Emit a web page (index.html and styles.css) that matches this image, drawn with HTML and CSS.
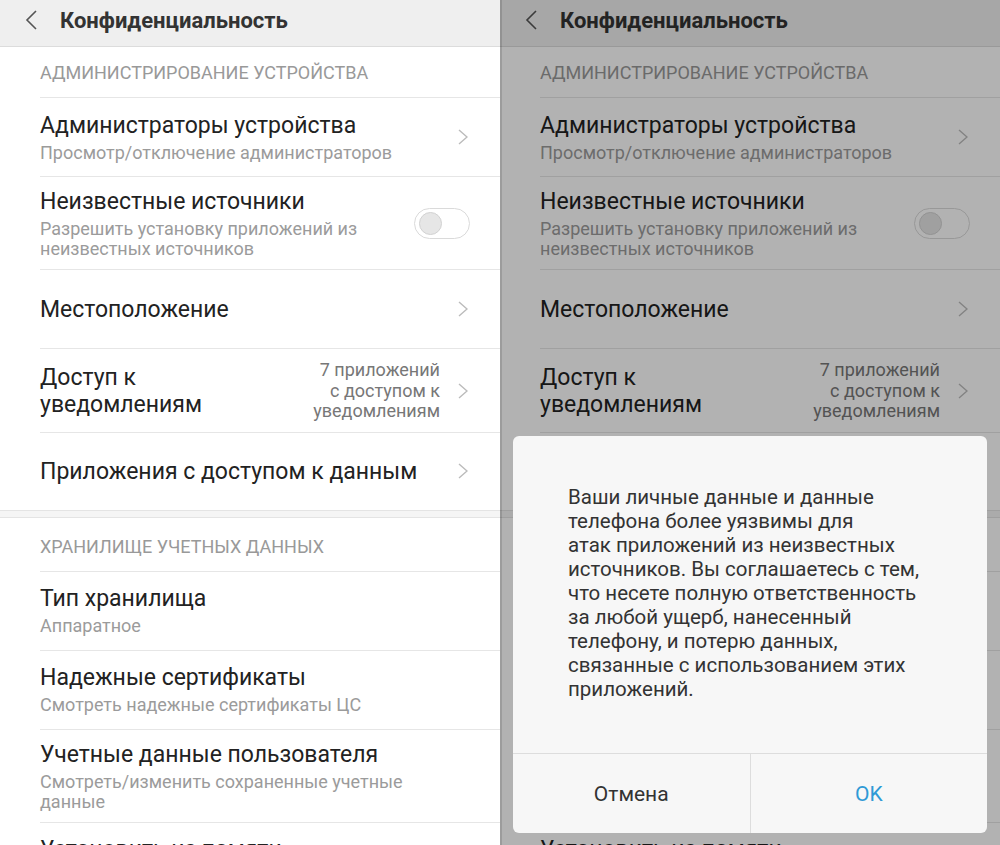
FILE: index.html
```html
<!DOCTYPE html>
<html lang="ru">
<head>
  <meta charset="UTF-8" />
  <meta name="viewport" content="width=device-width, initial-scale=1.0"/>
  <title>Конфиденциальность</title>
  <link rel="stylesheet" href="styles.css">
</head>
<body>
  <div class="screens">
    <section class="phone" id="settings">
      <header class="bar">
        <svg class="back" viewBox="0 0 12 20"><path d="M11 1L2 10l9 9" /></svg>
        <h1>Конфиденциальность</h1>
      </header>

      <div class="group-title">Администрирование устройства</div>
      <ul class="list">
        <li class="row">
          <div class="text">
            <div class="title">Администраторы устройства</div>
            <div class="sub">Просмотр/отключение администраторов</div>
          </div>
          <svg class="chev" viewBox="0 0 10 16"><path d="M1 1l8 7-8 7" /></svg>
        </li>
        <li class="row tall">
          <div class="text">
            <div class="title">Неизвестные источники</div>
            <div class="sub">Разрешить установку приложений из неизвестных источников</div>
          </div>
          <div class="switch"><span class="knob"></span></div>
        </li>
        <li class="row">
          <div class="text">
            <div class="title">Местоположение</div>
          </div>
          <svg class="chev" viewBox="0 0 10 16"><path d="M1 1l8 7-8 7" /></svg>
        </li>
        <li class="row tall">
          <div class="text">
            <div class="title">Доступ к<br>уведомлениям</div>
          </div>
          <div class="value">7 приложений<br>с доступом к<br>уведомлениям</div>
          <svg class="chev" viewBox="0 0 10 16"><path d="M1 1l8 7-8 7" /></svg>
        </li>
        <li class="row">
          <div class="text">
            <div class="title">Приложения с доступом к данным</div>
          </div>
          <svg class="chev" viewBox="0 0 10 16"><path d="M1 1l8 7-8 7" /></svg>
        </li>
      </ul>

      <div class="gap"></div>

      <div class="group-title second">Хранилище учетных данных</div>
      <ul class="list">
        <li class="row">
          <div class="text">
            <div class="title">Тип хранилища</div>
            <div class="sub">Аппаратное</div>
          </div>
        </li>
        <li class="row">
          <div class="text">
            <div class="title">Надежные сертификаты</div>
            <div class="sub">Смотреть надежные сертификаты ЦС</div>
          </div>
        </li>
        <li class="row tall">
          <div class="text">
            <div class="title">Учетные данные пользователя</div>
            <div class="sub">Смотреть/изменить сохраненные учетные данные</div>
          </div>
        </li>
        <li class="row">
          <div class="text">
            <div class="title">Установить из памяти</div>
            <div class="sub">Установить сертификаты из памяти</div>
          </div>
        </li>
      </ul>
    </section>

    <section class="phone" id="confirm">
      <div class="dim"></div>
      <div class="dialog">
        <p class="dialog-body">
          Ваши личные данные и данные<br>
          телефона более уязвимы для<br>
          атак приложений из неизвестных<br>
          источников. Вы соглашаетесь с тем,<br>
          что несете полную ответственность<br>
          за любой ущерб, нанесенный<br>
          телефону, и потерю данных,<br>
          связанные с использованием этих<br>
          приложений.
        </p>
        <div class="dialog-actions">
          <button>Отмена</button>
          <button class="ok">OK</button>
        </div>
      </div>
    </section>
  </div>

  <script>
    // the dimmed screen shows the same settings list under the dialog
    const settings = document.getElementById('settings');
    const confirmScreen = document.getElementById('confirm');
    confirmScreen.prepend(...[...settings.children].map(el => el.cloneNode(true)));
  </script>
</body>
</html>
```

FILE: styles.css
```css
* { margin: 0; padding: 0; box-sizing: border-box; }
body {
  font-family: Roboto, "Noto Sans", sans-serif;
  background: #fff;
}
.screens {
  display: flex;
  width: 1000px;
  height: 845px;
  overflow: hidden;
}
.phone {
  position: relative;
  width: 500px;
  height: 845px;
  overflow: hidden;
  background: #fff;
}
.bar {
  height: 47px;
  background: #efefef;
  border-bottom: 1px solid #dcdcdc;
  display: flex;
  align-items: center;
  padding: 0 0 6px 25px;
}
.back {
  width: 12px;
  height: 20px;
  margin-right: 23px;
  fill: none;
  stroke: #555;
  stroke-width: 1.6;
}
.bar h1 {
  font-size: 22px;
  font-weight: 700;
  color: #333;
}
.group-title {
  margin-left: 40px;
  height: 51px;
  display: flex;
  align-items: center;
  border-bottom: 1px solid #e6e6e6;
  font-size: 18px;
  color: #999;
  text-transform: uppercase;
}
.group-title.second {
  height: 54px;
  padding-top: 5px;
}
.list { list-style: none; }
.row {
  margin-left: 40px;
  min-height: 79px;
  padding: 13px 0;
  display: flex;
  align-items: center;
  border-bottom: 1px solid #e6e6e6;
}
.row.tall { padding: 11px 0 10px; }
.list .row:last-child {
  min-height: 77px;
  border-bottom: none;
}
.text { max-width: 395px; }
.title {
  font-size: 23px;
  line-height: 27px;
  color: #222;
}
.sub {
  margin-top: 4px;
  font-size: 18px;
  line-height: 20px;
  color: #9b9b9b;
}
.value {
  margin-left: auto;
  text-align: right;
  font-size: 18px;
  line-height: 20.5px;
  color: #777;
}
.chev {
  flex-shrink: 0;
  width: 10px;
  height: 16px;
  margin-left: auto;
  margin-right: 32px;
  fill: none;
  stroke: #bbb;
  stroke-width: 1.4;
}
.value + .chev { margin-left: 18px; }
.switch {
  flex-shrink: 0;
  margin-left: auto;
  margin-right: 30px;
  width: 56px;
  height: 31px;
  border: 1px solid #dadada;
  border-radius: 16px;
  background: #fff;
  display: flex;
  align-items: center;
  padding-left: 4px;
}
.knob {
  width: 23px;
  height: 23px;
  border-radius: 50%;
  background: #e6e6e6;
  border: 1px solid #d2d2d2;
}
.gap {
  height: 8px;
  background: #f5f5f5;
  border-top: 1px solid #e4e4e4;
  border-bottom: 1px solid #e4e4e4;
}
.dim {
  position: absolute;
  inset: 0;
  background: rgba(0, 0, 0, 0.3);
  box-shadow: inset 2px 0 0 rgba(0, 0, 0, 0.12);
}
.dialog {
  position: absolute;
  left: 13px;
  top: 436px;
  width: 474px;
  height: 397px;
  background: #f7f7f7;
  border-radius: 6px;
  display: flex;
  flex-direction: column;
  overflow: hidden;
}
.dialog-body {
  flex: 1;
  padding: 49px 20px 0 55px;
  font-size: 20.5px;
  line-height: 24px;
  color: #333;
}
.dialog-actions {
  display: flex;
  height: 80px;
  border-top: 1px solid #dddddd;
}
.dialog-actions button {
  flex: 1;
  border: none;
  background: none;
  font-family: inherit;
  font-size: 21px;
  color: #333;
  cursor: pointer;
}
.dialog-actions button + button { border-left: 1px solid #dddddd; }
.dialog-actions .ok { color: #2f9ad6; }
```
